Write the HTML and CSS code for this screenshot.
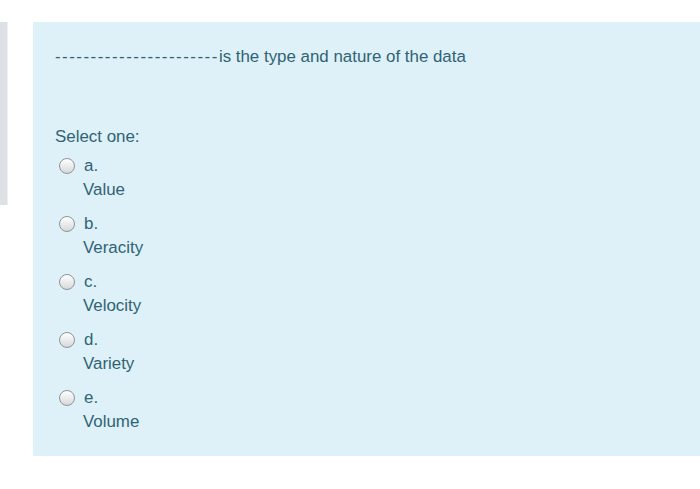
FILE: index.html
```html
<!DOCTYPE html>
<html>
<head>
<meta charset="utf-8">
<link rel="stylesheet" href="styles.css">
</head>
<body>
<div class="page">
  <div class="strip"></div>
  <div class="panel">
    <div class="qtext"><span class="dashes">-----------------------</span>is the type and nature of the data</div>
    <div class="prompt">Select one:</div>
    <div class="answers">
      <div class="opt"><div class="row"><span class="radio"></span><span class="letter">a.</span></div><div class="val">Value</div></div>
      <div class="opt"><div class="row"><span class="radio"></span><span class="letter">b.</span></div><div class="val">Veracity</div></div>
      <div class="opt"><div class="row"><span class="radio"></span><span class="letter">c.</span></div><div class="val">Velocity</div></div>
      <div class="opt"><div class="row"><span class="radio"></span><span class="letter">d.</span></div><div class="val">Variety</div></div>
      <div class="opt"><div class="row"><span class="radio"></span><span class="letter">e.</span></div><div class="val">Volume</div></div>
    </div>
  </div>
</div>
</body>
</html>
```
FILE: styles.css
```css
html, body {
  margin: 0;
  padding: 0;
  background: #ffffff;
}
body {
  font-family: "Liberation Sans", Arial, sans-serif;
  font-size: 16.9px;
  color: #2f6473;
}
.page {
  display: flex;
  align-items: flex-start;
  padding-top: 22px;
  gap: 25px;
}
.strip {
  width: 7px;
  height: 183px;
  background: #dde1e6;
  border-right: 1px solid #eef0f2;
  flex: none;
}
.panel {
  flex: 1;
  background: #def0f8;
  height: 434px;
  box-sizing: border-box;
  padding: 24px 0 0 22px;
}
.qtext {
  line-height: 22px;
  height: 22px;
}
.dashes {
  letter-spacing: 1.5px;
}
.prompt {
  margin-top: 57px;
  line-height: 24px;
}
.answers {
  margin-top: 5px;
  display: flex;
  flex-direction: column;
}
.opt {
  height: 58px;
}
.row {
  display: flex;
  align-items: center;
  height: 24px;
  padding-left: 4px;
}
.radio {
  width: 16px;
  height: 16px;
  border-radius: 50%;
  box-sizing: border-box;
  border: 1px solid #8f9497;
  background: linear-gradient(#ffffff, #d6d8da);
  flex: none;
  margin-right: 9px;
}
.letter {
  line-height: 24px;
}
.val {
  line-height: 24px;
  padding-left: 28px;
  margin-top: 0;
}
```
